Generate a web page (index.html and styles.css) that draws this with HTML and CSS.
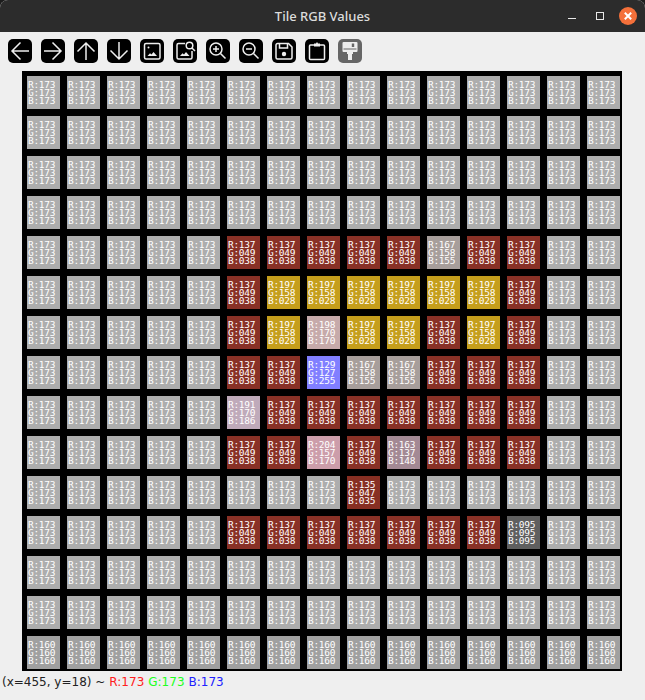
FILE: index.html
```html
<!DOCTYPE html>
<html lang="en">
<head>
    <meta charset="UTF-8">
    <title>Tile RGB Values</title>
    <link rel="stylesheet" href="styles.css">
</head>
<body>
    <div class="window">
        <div class="titlebar">
            <span class="title">Tile RGB Values</span>
            <div class="win-controls">
                <span class="win-min"></span>
                <span class="win-max"></span>
                <svg class="win-close" width="18" height="18" viewBox="0 0 18 18">
                    <circle cx="9" cy="9" r="9" fill="#f4703a"/>
                    <path d="M5.8 5.8L12.2 12.2M12.2 5.8L5.8 12.2" stroke="#fff" stroke-width="2"/>
                </svg>
            </div>
        </div>

        <div class="toolbar">
            <button class="tool"><svg viewBox="0 0 24 24"><path d="M21 12H4M12.5 3.5L4 12L12.5 20.5"/></svg></button>
            <button class="tool"><svg viewBox="0 0 24 24"><path d="M3 12H20M11.5 3.5L20 12L11.5 20.5"/></svg></button>
            <button class="tool"><svg viewBox="0 0 24 24"><path d="M12 21V4M3.5 12.5L12 4L20.5 12.5"/></svg></button>
            <button class="tool"><svg viewBox="0 0 24 24"><path d="M12 3V20M3.5 11.5L12 20L20.5 11.5"/></svg></button>
            <button class="tool"><svg viewBox="0 0 24 24"><rect x="4.5" y="4.5" width="15.5" height="15.5" rx="1.5"/><circle class="solid" cx="8.5" cy="8.5" r="1"/><path class="solid" d="M7.5 17L10 14.2L11.5 15.5L13.5 13L17 17Z"/></svg></button>
            <button class="tool"><svg viewBox="0 0 24 24"><path d="M12 4.500H5.500A1.500 1.500 0 0 0 4 6V18.500A1.500 1.500 0 0 0 5.500 20H17.500A1.500 1.500 0 0 0 19 18.500V12"/><circle cx="16.500" cy="6.500" r="3.300"/><path d="M19 9L22 12"/><path class="solid" d="M7 17L9.500 14.200L11 15.500L13 13L16.500 17Z"/></svg></button>
            <button class="tool"><svg viewBox="0 0 24 24"><circle cx="10" cy="10" r="6"/><path d="M19.500 19.500L14.500 14.500M7 10H13M10 7V13"/></svg></button>
            <button class="tool"><svg viewBox="0 0 24 24"><circle cx="10" cy="10" r="6"/><path d="M19.500 19.500L14.500 14.500M7 10H13"/></svg></button>
            <button class="tool"><svg viewBox="0 0 24 24"><path d="M5.500 4.500H16.500L20 8V18.500A1.500 1.500 0 0 1 18.500 20H5.500A1.500 1.500 0 0 1 4 18.500V6A1.500 1.500 0 0 1 5.500 4.500Z"/><path d="M7.500 4.500V9H15.500V4.500"/><circle class="solid" cx="12" cy="15" r="2.200"/></svg></button>
            <button class="tool"><svg viewBox="0 0 24 24"><rect x="4.500" y="6" width="15" height="14.500" rx="1"/><path class="solid" d="M9 7.500V4.500H11L12 3L13 4.500H15V7.500Z"/></svg></button>
            <button class="tool tool-off"><svg viewBox="0 0 24 24"><path class="solid" d="M5.500 3H18.500A1 1 0 0 1 19.500 4V12A1 1 0 0 1 18.500 13H15V15H14V21H10V15H9V13H5.500A1 1 0 0 1 4.500 12V4A1 1 0 0 1 5.500 3Z"/><path class="notch" d="M13.800 4.500H16.200V8H13.800ZM5.500 9.500H18.500V10.500H5.500Z"/></svg></button>
        </div>

        <div class="board" id="board"></div>

        <div class="status">
            <span>(x=455, y=18) ~</span>
            <span class="val-r">R:173</span>
            <span class="val-g">G:173</span>
            <span class="val-b">B:173</span>
        </div>
    </div>

    <script src="script.js"></script>
</body>
</html>
```

FILE: styles.css
```css
html, body {
    margin: 0;
    background: #1c1c1c;
}
.window {
    width: 645px;
    height: 700px;
    background-color: #efefef;
    border-radius: 8px 8px 0 0;
    overflow: hidden;
    display: flex;
    flex-direction: column;
}
.titlebar {
    height: 32px;
    flex: none;
    background-color: #2c2c2c;
    color: #dcdcdc;
    display: flex;
    justify-content: center;
    align-items: center;
    position: relative;
}
.title {
    font-family: "Noto Sans", sans-serif;
    font-size: 13px;
    font-weight: 500;
}
.win-controls {
    position: absolute;
    top: 0;
    right: 8px;
    height: 32px;
    display: flex;
    align-items: center;
}
.win-min {
    width: 8px;
    height: 1px;
    margin-top: 5px;
    background-color: #e8e8e8;
}
.win-max {
    width: 6px;
    height: 6px;
    border: 1px solid #e8e8e8;
    margin-left: 20px;
}
.win-close {
    margin-left: 15px;
}
.toolbar {
    height: 39px;
    flex: none;
    box-sizing: border-box;
    padding: 7px 0 0 8px;
    display: flex;
    gap: 9px;
}
.tool {
    width: 24px;
    height: 24px;
    padding: 0;
    border: none;
    border-radius: 5px;
    background-color: #000;
}
.tool svg {
    display: block;
    width: 24px;
    height: 24px;
    fill: none;
    stroke: #eee;
    stroke-width: 1.5;
}
.tool svg .solid {
    fill: #eee;
    stroke: none;
}
.tool-off {
    background-color: #666;
}
.tool svg .notch {
    fill: #666;
    stroke: none;
}
.board {
    width: 600px;
    height: 600px;
    flex: none;
    box-sizing: border-box;
    margin-left: 22px;
    padding: 5px 2px 2px 5px;
    background-color: #000;
    display: grid;
    grid-template-columns: repeat(15, 33px);
    grid-auto-rows: 33px;
    gap: 7px;
}
.tile {
    box-sizing: border-box;
    padding: 5px 0 0 1px;
    font-family: "DejaVu Sans Mono", monospace;
    font-size: 9.5px;
    letter-spacing: -0.3px;
    line-height: 8px;
    color: #fff;
    white-space: pre;
    overflow: hidden;
}
.status {
    flex: 1;
    padding: 3px 0 0 2px;
    display: flex;
    align-items: flex-start;
    gap: 4px;
    font-family: "DejaVu Sans", sans-serif;
    font-size: 12px;
    line-height: 16px;
    color: #222;
}
.val-r {
    color: #ff2020;
}
.val-g {
    color: #20ff20;
}
.val-b {
    color: #2020ff;
}
```

FILE: script.js
```js
// colour of each tile, one string per row
const colors = {
    a: [173, 173, 173],
    r: [137, 49, 38],
    y: [197, 158, 28],
    p: [198, 170, 170],
    u: [129, 127, 255],
    t: [167, 158, 155],
    m: [191, 170, 186],
    k: [204, 157, 170],
    s: [163, 137, 148],
    d: [135, 47, 35],
    n: [95, 95, 95],
    c: [160, 160, 160],
};

const rows = [
    'aaaaaaaaaaaaaaa',
    'aaaaaaaaaaaaaaa',
    'aaaaaaaaaaaaaaa',
    'aaaaaaaaaaaaaaa',
    'aaaaarrrrrtrraa',
    'aaaaaryyyyyyraa',
    'aaaaarypyyryraa',
    'aaaaarruttrrraa',
    'aaaaamrrrrrrraa',
    'aaaaarrkrsrrraa',
    'aaaaaaaadaaaaaa',
    'aaaaarrrrrrrnaa',
    'aaaaaaaaaaaaaaa',
    'aaaaaaaaaaaaaaa',
    'ccccccccccccccc',
];

function pad(n) {
    return String(n).padStart(3, '0');
}

const board = document.getElementById('board');
rows.forEach(function(row) {
    for (const key of row) {
        const [r, g, b] = colors[key];
        const tile = document.createElement('div');
        tile.className = 'tile';
        tile.style.backgroundColor = `rgb(${r}, ${g}, ${b})`;
        tile.textContent = `R:${pad(r)}\nG:${pad(g)}\nB:${pad(b)}`;
        board.appendChild(tile);
    }
});
```
